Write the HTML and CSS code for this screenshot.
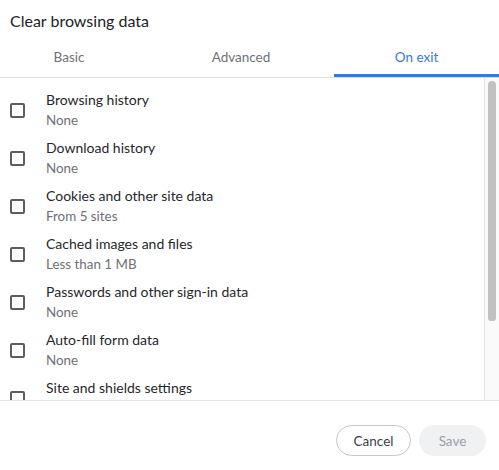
FILE: index.html
```html
<!DOCTYPE html>
<html>
<head>
<meta charset="utf-8">
<link rel="stylesheet" href="styles.css">
</head>
<body>
<div class="dialog">
  <div class="title">Clear browsing data</div>
  <div class="tabs">
    <div class="tab tab-basic">Basic</div>
    <div class="tab tab-adv">Advanced</div>
    <div class="tab tab-exit active">On exit</div>
  </div>
  <div class="body">
    <div class="list">
      <div class="row"><span class="box"></span><div class="txt"><div class="main">Browsing history</div><div class="sub">None</div></div></div>
      <div class="row"><span class="box"></span><div class="txt"><div class="main">Download history</div><div class="sub">None</div></div></div>
      <div class="row"><span class="box"></span><div class="txt"><div class="main">Cookies and other site data</div><div class="sub">From 5 sites</div></div></div>
      <div class="row"><span class="box"></span><div class="txt"><div class="main">Cached images and files</div><div class="sub">Less than 1 MB</div></div></div>
      <div class="row"><span class="box"></span><div class="txt"><div class="main">Passwords and other sign-in data</div><div class="sub">None</div></div></div>
      <div class="row"><span class="box"></span><div class="txt"><div class="main">Auto-fill form data</div><div class="sub">None</div></div></div>
      <div class="row"><span class="box"></span><div class="txt"><div class="main">Site and shields settings</div><div class="sub-gap"></div></div></div>
    </div>
    <div class="scrollbar"><div class="thumb"></div></div>
  </div>
  <div class="footer">
    <button class="btn cancel">Cancel</button>
    <button class="btn save">Save</button>
  </div>
</div>
</body>
</html>
```
FILE: styles.css
```css
html, body {
  margin: 0;
  padding: 0;
  background: #ffffff;
}
body {
  font-family: "Lato", "Noto Sans", sans-serif;
  color: #202124;
}
.dialog {
  width: 499px;
  height: 470px;
  display: flex;
  flex-direction: column;
  overflow: hidden;
}
.title {
  height: 40px;
  flex: none;
  box-sizing: border-box;
  padding: 11px 10px 0;
  font-size: 16px;
  line-height: 20px;
  color: #212226;
}
.tabs {
  display: flex;
  flex: none;
  height: 38px;
  box-sizing: border-box;
  border-bottom: 1px solid #e0e0e0;
}
.tab {
  font-size: 13.5px;
  color: #6f7278;
  text-align: center;
  line-height: 34px;
  box-sizing: border-box;
  border-bottom: 3px solid transparent;
}
.tab-basic { width: 138px; }
.tab-adv { width: 196px; padding-left: 10px; }
.tab-exit { width: 165px; }
.tab.active {
  color: #3a76e0;
  border-bottom-color: #3a76e0;
}
.body {
  display: flex;
  flex: none;
  height: 322px;
}
.list {
  flex: 1;
  overflow: hidden;
  padding-top: 8px;
}
.scrollbar {
  width: 11px;
  flex: none;
  background: #fafafa;
  border-left: 1px solid #e6e6e6;
  padding: 3px 0 0 3px;
  box-sizing: content-box;
}
.thumb {
  width: 8px;
  height: 240px;
  background: #c1c1c1;
  border-radius: 4px 4px 3px 3px;
}
.row {
  display: flex;
  align-items: center;
  height: 48px;
  padding: 0 10px;
}
.box {
  width: 15px;
  height: 15px;
  box-sizing: border-box;
  border: 2px solid #5a5d63;
  border-radius: 2px;
  flex: none;
  margin-right: 21px;
}
.main {
  font-size: 14px;
  line-height: 20px;
  color: #26272b;
}
.sub {
  font-size: 13.4px;
  line-height: 20px;
  color: #6e7075;
}
.sub-gap {
  height: 20px;
}
.footer {
  flex: 1;
  border-top: 1px solid #e3e3e3;
  display: flex;
  justify-content: flex-end;
  align-items: flex-start;
  gap: 8px;
  padding: 24px 13px 0 0;
}
.btn {
  font-family: inherit;
  font-size: 13.5px;
  height: 31px;
  border-radius: 16px;
  padding: 0;
  cursor: pointer;
}
.cancel {
  width: 75px;
  background: #ffffff;
  border: 1px solid #c4c5d0;
  color: #3b3d48;
}
.save {
  width: 67px;
  background: #f0f1f3;
  border: none;
  color: #9a9ea6;
}
```
